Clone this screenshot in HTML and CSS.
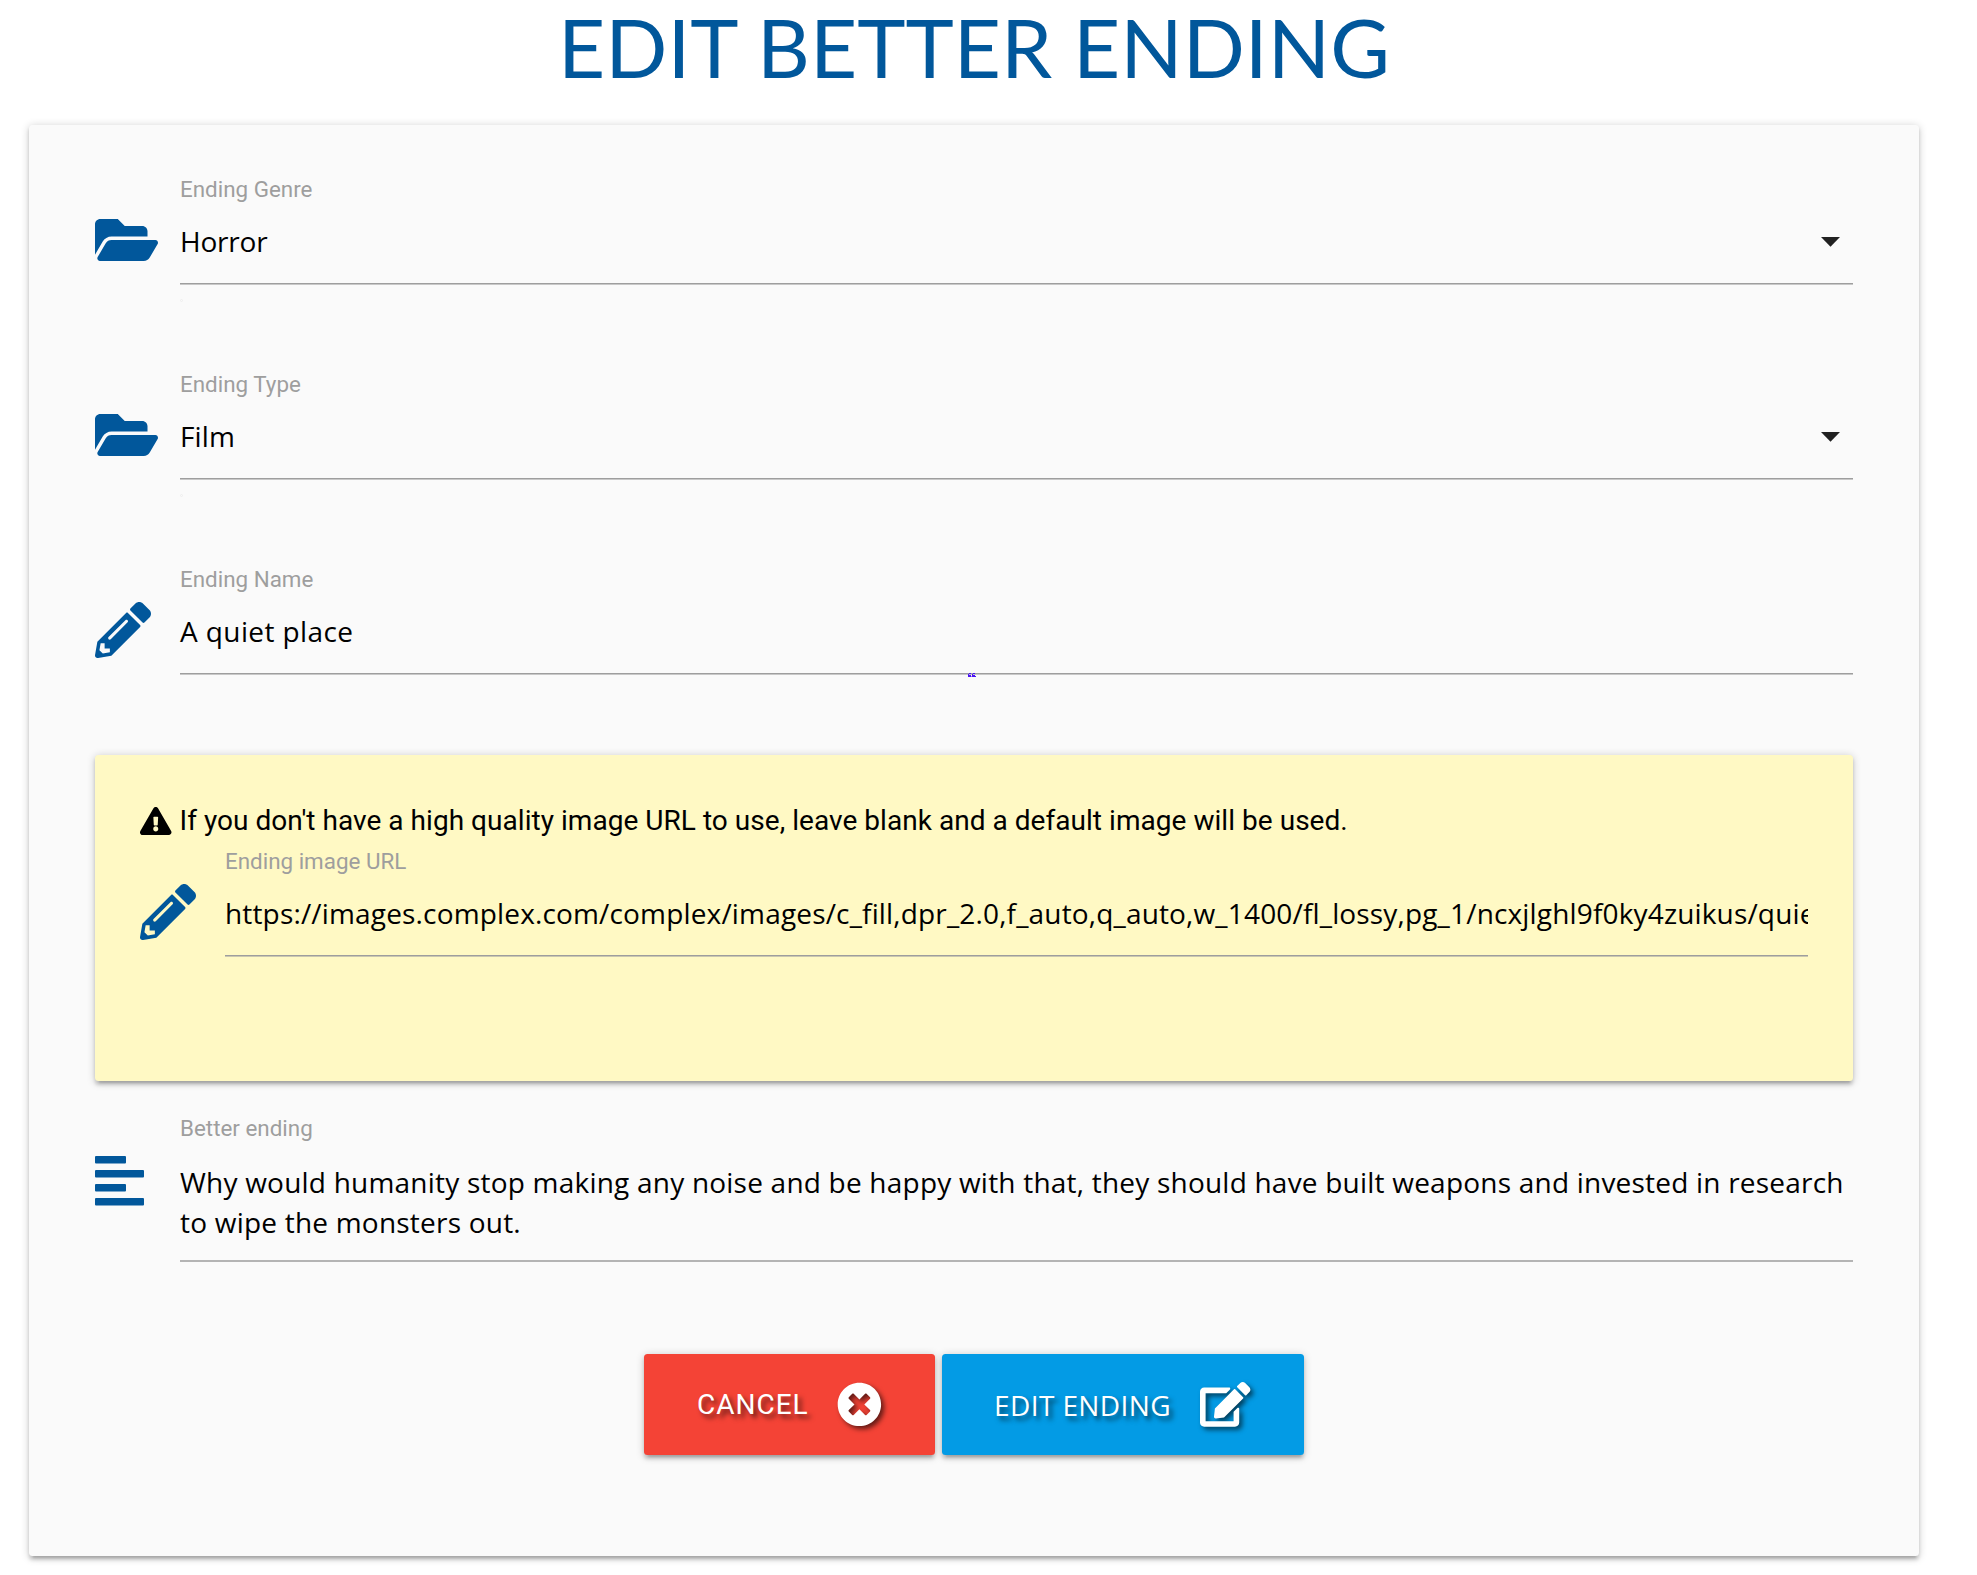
FILE: index.html
```
<!DOCTYPE html>
<html lang="en">
<head>
<meta charset="utf-8">
<title>Edit Better Ending</title>
<link rel="stylesheet" href="styles.css">
</head>
<body>
<svg class="sprite" aria-hidden="true">
  <symbol id="folder-open" viewBox="0 0 576 512"><path d="M572.694 292.093L500.27 416.248A63.997 63.997 0 0 1 444.989 448H45.025c-18.523 0-30.064-20.093-20.731-36.093l72.424-124.155A64 64 0 0 1 152 256h399.964c18.523 0 30.064 20.093 20.73 36.093zM152 224h328v-48c0-26.51-21.49-48-48-48H272l-64-64H48C21.49 64 0 85.49 0 112v278.046l69.077-118.418C86.214 242.25 117.989 224 152 224z"/></symbol>
  <symbol id="pencil" viewBox="0 0 512 512"><path d="M497.9 142.1l-46.1 46.1c-4.7 4.7-12.3 4.7-17 0l-111-111c-4.7-4.7-4.7-12.3 0-17l46.1-46.1c18.7-18.7 49.1-18.7 67.9 0l60.1 60.1c18.8 18.7 18.8 49.1 0 67.9zM284.2 99.8L21.6 362.4.4 483.9c-2.9 16.4 11.4 30.6 27.8 27.8l121.5-21.3 262.6-262.6c4.7-4.7 4.7-12.3 0-17l-111-111c-4.8-4.7-12.4-4.7-17.1 0zM124.1 339.9c-5.5-5.5-5.5-14.3 0-19.8l154-154c5.5-5.5 14.3-5.5 19.8 0s5.5 14.3 0 19.8l-154 154c-5.5 5.5-14.3 5.5-19.8 0zM88 424h48v36.3l-64.5 11.3-31.1-31.1L51.7 376H88v48z"/></symbol>
</svg>
<main class="page">
  <h1 class="title">EDIT BETTER ENDING</h1>
  <form class="card">
    <div class="field">
      <svg class="icon icon-folder"><use href="#folder-open"/></svg>
      <div class="body">
        <div class="label">Ending Genre</div>
        <div class="input select"><span class="genre">Horror</span><svg class="caret" viewBox="0 0 19 10"><path d="M0 0h19l-9.5 9.8z"/></svg></div>
        <i class="dot"></i>
      </div>
    </div>
    <div class="field">
      <svg class="icon icon-folder"><use href="#folder-open"/></svg>
      <div class="body">
        <div class="label">Ending Type</div>
        <div class="input select"><span class="film">Film</span><svg class="caret" viewBox="0 0 19 10"><path d="M0 0h19l-9.5 9.8z"/></svg></div>
        <i class="dot"></i>
      </div>
    </div>
    <div class="field field-name">
      <svg class="icon"><use href="#pencil"/></svg>
      <div class="body">
        <div class="label">Ending Name</div>
        <div class="input name">A quiet place</div>
        <svg class="mark" viewBox="0 0 8 4"><path d="M1 0h2v1H1v1h2v1h1V1h1V0h2v1H5v1h2v1h1v1H4V3L3 4H0V1h1z"/></svg>
      </div>
    </div>
    <section class="notice">
      <p class="notice-text"><svg class="warn" viewBox="0 0 576 512"><path d="M569.517 440.013C587.975 472.007 564.806 512 527.94 512H48.054c-36.937 0-59.999-40.055-41.577-71.987L246.423 23.985c18.467-32.009 64.72-31.951 83.154 0l239.94 416.028zM288 354c-25.405 0-46 20.595-46 46s20.595 46 46 46 46-20.595 46-46-20.595-46-46-46zm-43.673-165.346l7.418 136c.347 6.364 5.609 11.346 11.982 11.346h48.546c6.373 0 11.635-4.982 11.982-11.346l7.418-136c.375-6.874-5.098-12.654-11.982-12.654h-63.383c-6.884 0-12.356 5.78-11.981 12.654z"/></svg><span>If you don't have a high quality image URL to use, leave blank and a default image will be used.</span></p>
      <div class="field field-url">
        <svg class="icon"><use href="#pencil"/></svg>
        <div class="body">
          <div class="label">Ending image URL</div>
          <div class="input url">https://images.complex.com/complex/images/c_fill,dpr_2.0,f_auto,q_auto,w_1400/fl_lossy,pg_1/ncxjlghl9f0ky4zuikus/quie</div>
        </div>
      </div>
    </section>
    <div class="field field-text">
      <svg class="icon icon-align" viewBox="0 0 49 50"><rect width="31" height="7.6" rx="1"/><rect y="14" width="49" height="7.6" rx="1"/><rect y="28" width="31" height="7.6" rx="1"/><rect y="42" width="49" height="7.6" rx="1"/></svg>
      <div class="body">
        <div class="label">Better ending</div>
        <div class="textarea">Why would humanity stop making any noise and be happy with that, they should have built weapons and invested in research<br>to wipe the monsters out.</div>
      </div>
    </div>
    <div class="actions">
      <a class="btn btn-cancel"><span>CANCEL</span><svg class="btn-icon" viewBox="0 0 512 512"><path d="M256 8C119 8 8 119 8 256s111 248 248 248 248-111 248-248S393 8 256 8zm121.6 313.1c4.7 4.7 4.7 12.3 0 17L338 377.6c-4.7 4.7-12.3 4.7-17 0L256 312l-65.1 65.6c-4.7 4.7-12.3 4.7-17 0L134.4 338c-4.7-4.7-4.7-12.3 0-17l65.6-65-65.6-65.1c-4.7-4.7-4.7-12.3 0-17l39.6-39.6c4.7-4.7 12.3-4.7 17 0l65 65.7 65.1-65.6c4.7-4.7 12.3-4.7 17 0l39.6 39.6c4.7 4.7 4.7 12.3 0 17L312 256l65.6 65.1z"/></svg></a>
      <a class="btn btn-edit"><span>EDIT ENDING</span><svg class="btn-icon btn-icon-wide" viewBox="0 0 576 512"><path d="M402.6 83.2l90.2 90.2c3.8 3.8 3.8 10 0 13.8L274.4 405.6l-92.8 10.3c-12.4 1.4-22.9-9.1-21.5-21.5l10.3-92.8L388.8 83.2c3.8-3.8 10-3.8 13.8 0zm162-22.9l-48.8-48.8c-15.2-15.2-39.9-15.2-55.2 0l-35.4 35.4c-3.8 3.8-3.8 10 0 13.8l90.2 90.2c3.8 3.8 10 3.8 13.8 0l35.4-35.4c15.2-15.3 15.2-40 0-55.2zM384 346.2V448H64V128h229.8c3.2 0 6.2-1.3 8.5-3.5l40-40c7.6-7.6 2.2-20.5-8.5-20.5H48C21.5 64 0 85.5 0 112v352c0 26.5 21.5 48 48 48h352c26.5 0 48-21.5 48-48V306.2c0-10.7-12.9-16-20.5-8.5l-40 40c-2.2 2.3-3.5 5.3-3.5 8.5z"/></svg></a>
    </div>
  </form>
</main>
</body>
</html>
```
FILE: styles.css
```
* { box-sizing: border-box; }
body { margin: 0; background: #fff; font-family: Roboto, sans-serif; color: #000; }
.sprite { display: none; }
.page { width: 1948px; padding: 1px 29px 19px; }
.title {
  margin: 0 0 34px;
  font: 400 81.76px/90px Lato, sans-serif;
  text-align: center;
  color: #01579b;
}
.card {
  height: 1431px;
  padding: 52px 66px 0;
  background: #fafafa;
}
.card, .notice, .btn {
  border-radius: 3.5px;
  box-shadow: 0 3.5px 3.5px rgba(0,0,0,.14), 0 5.25px 1.75px -3.5px rgba(0,0,0,.12), 0 1.75px 8.75px rgba(0,0,0,.2);
}
.field {
  display: grid;
  grid-template-columns: 85px minmax(0, 1fr);
  align-items: start;
  height: 108px;
  margin-bottom: 87px;
}
.field-name { margin-bottom: 80px; }
.field-url { margin-bottom: 0; }
.field-text { height: 146px; margin-bottom: 92px; }
.icon { width: 56px; height: 56px; margin-top: 35px; fill: #01579b; }
.icon-folder { width: 63px; }
.icon-align { width: 49px; height: 50px; margin-top: 40px; }
.body { position: relative; }
.label { font-size: 22.4px; line-height: 24px; color: #9e9e9e; }
.input {
  height: 83px;
  padding-bottom: 2px;
  border-bottom: 1px solid #9e9e9e;
  box-shadow: 0 1px rgba(158,158,158,.55);
  font: 28px/80px "Open Sans", sans-serif;
  letter-spacing: .2px;
  white-space: nowrap;
}
.select { display: flex; justify-content: space-between; align-items: flex-start; padding-right: 13px; }
.genre { letter-spacing: -.2px; }
.film { letter-spacing: .1px; }
.name { letter-spacing: .4px; }
.url { overflow: hidden; letter-spacing: .16px; font-variant-ligatures: none; }
.caret { width: 19px; height: 10px; margin-top: 36px; fill: #212121; }
.dot {
  position: absolute;
  left: 0;
  top: 122px;
  width: 3px;
  height: 3px;
  border: 1px solid #efefef;
  border-radius: 50%;
}
.mark { position: absolute; left: 788px; top: 106px; width: 8px; height: 4px; fill: #4a12f5; }
.notice { height: 326px; margin-bottom: 35px; padding: 45px; background: #fff9c4; }
.notice-text {
  display: flex;
  gap: 8px;
  margin: 0 0 7px;
  font-size: 28px;
  line-height: 42px;
  letter-spacing: .04px;
  white-space: nowrap;
}
.warn { width: 31.5px; height: 28px; margin-top: 7px; }
.textarea {
  height: 122px;
  padding-top: 22px;
  border-bottom: 2px solid #b4b4b4;
  font: 28px/40px "Open Sans", sans-serif;
  letter-spacing: .215px;
  white-space: nowrap;
}
.actions { display: flex; justify-content: center; gap: 7px; }
.btn {
  display: flex;
  justify-content: space-between;
  align-items: center;
  height: 101px;
  padding: 0 53px;
  color: #fff;
  font-size: 28px;
  line-height: 42px;
  text-shadow: 3.5px 3.5px 5px rgba(0,0,0,.6);
}
.btn-cancel { width: 291px; background: #f44336; letter-spacing: 1px; }
.btn-cancel span { padding-top: 1px; }
.btn-edit { width: 362px; padding: 0 54px 0 52px; background: #039be5; font-family: "Open Sans", sans-serif; letter-spacing: .4px; }
.btn-icon { width: 44.8px; height: 44.8px; fill: #fff; overflow: visible; filter: drop-shadow(3.5px 3.5px 2.5px rgba(0,0,0,.6)); }
.btn-icon-wide { width: 50.4px; }
```
